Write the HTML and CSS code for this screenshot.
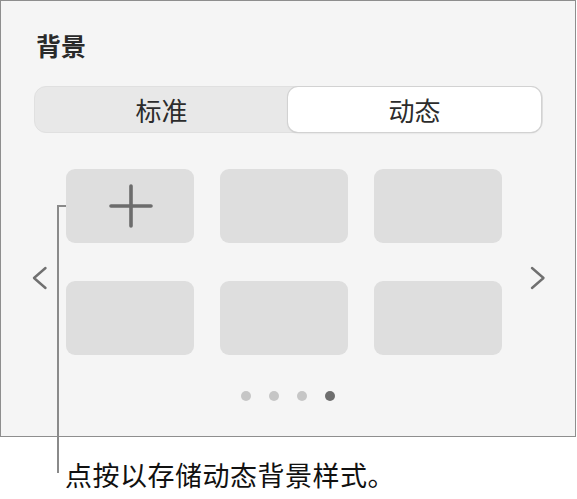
FILE: index.html
```html
<!DOCTYPE html>
<html lang="zh-CN">
<head>
<meta charset="utf-8">
<title>背景</title>
<link rel="stylesheet" href="styles.css">
</head>
<body>
<div class="page">
  <section class="panel">
    <h2 class="title">背景</h2>
    <div class="segmented">
      <div class="seg">标准</div>
      <div class="seg seg-active">动态</div>
    </div>
    <div class="carousel">
      <svg class="chev chev-left" width="16" height="24" viewBox="0 0 16 24"><path d="M13.5 2 L2 12 L13.5 22" fill="none" stroke="#707070" stroke-width="2.4" stroke-linecap="round" stroke-linejoin="round"/></svg>
      <div class="tiles">
        <div class="tile tile-add">
          <svg width="46" height="46" viewBox="0 0 46 46"><path d="M23 3 V43 M3 23 H43" stroke="#6c6c6c" stroke-width="3.6" stroke-linecap="round"/></svg>
        </div>
        <div class="tile"></div>
        <div class="tile"></div>
        <div class="tile"></div>
        <div class="tile"></div>
        <div class="tile"></div>
      </div>
      <svg class="chev chev-right" width="16" height="24" viewBox="0 0 16 24"><path d="M2 2 L13.5 12 L2 22" fill="none" stroke="#707070" stroke-width="2.4" stroke-linecap="round" stroke-linejoin="round"/></svg>
    </div>
    <div class="dots">
      <span class="dot"></span>
      <span class="dot"></span>
      <span class="dot"></span>
      <span class="dot dot-active"></span>
    </div>
  </section>
  <div class="callout-line"></div>
  <p class="caption">点按以存储动态背景样式。</p>
</div>
</body>
</html>
```
FILE: styles.css
```css
* { box-sizing: border-box; }
html, body {
  margin: 0;
  padding: 0;
  background: #ffffff;
}
body {
  font-family: "Noto Sans CJK SC", "Noto Sans", sans-serif;
  color: #222;
}
.page {
  position: relative;
  width: 577px;
  height: 499px;
}
.panel {
  width: 576px;
  height: 437px;
  background: #f5f5f5;
  border: 1px solid #8e8e8e;
  padding: 32px 0 0 33px;
  display: flex;
  flex-direction: column;
}
.title {
  margin: 0 0 0 2px;
  font-size: 25px;
  line-height: 25px;
  font-weight: 700;
  color: #2a2a2a;
}
.segmented {
  margin-top: 28px;
  width: 509px;
  height: 47px;
  background: #e8e8e8;
  border: 1px solid #e0e0e0;
  border-radius: 12px;
  padding: 0 1px 0 0;
  display: flex;
  align-items: center;
}
.seg {
  flex: 1;
  height: 45px;
  display: flex;
  align-items: center;
  justify-content: center;
  font-size: 26px;
  line-height: 26px;
  color: #2c2c2c;
}
.seg-active {
  background: #ffffff;
  border-radius: 10px;
  box-shadow: 0 0 0 1px #d2d2d2, 0 1px 2px rgba(0,0,0,0.18);
}
.carousel {
  margin-top: 36px;
  margin-left: -2px;
  display: flex;
  align-items: flex-start;
}
.chev {
  display: block;
  margin-top: 97px;
}
.chev-left { margin-right: 18px; }
.chev-right { margin-left: 28px; }
.tiles {
  display: grid;
  grid-template-columns: repeat(3, 128px);
  grid-auto-rows: 74px;
  column-gap: 26px;
  row-gap: 38px;
}
.tile {
  background: #dedede;
  border-radius: 9px;
}
.tile-add {
  display: flex;
  align-items: center;
  justify-content: center;
}
.tile-add svg { display: block; margin-left: 1px; }
.dots {
  margin-top: 36px;
  margin-left: -33px;
  display: flex;
  justify-content: center;
  gap: 18px;
}
.dot {
  width: 10px;
  height: 10px;
  border-radius: 50%;
  background: #c6c6c6;
}
.dot-active { background: #6e6e6e; }
.callout-line {
  position: absolute;
  left: 57px;
  top: 205px;
  width: 9px;
  height: 268px;
  border-left: 2px solid #8a8a8a;
  border-top: 2px solid #8a8a8a;
}
.caption {
  margin: 24px 0 0 65px;
  font-size: 27px;
  line-height: 27px;
  color: #111;
  letter-spacing: 0.5px;
}
```
